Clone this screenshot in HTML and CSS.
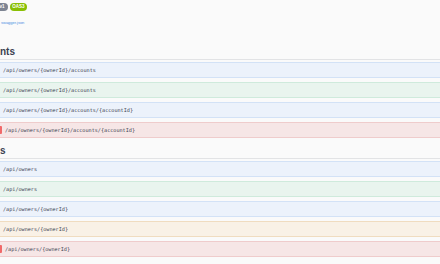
FILE: index.html
```html
<!DOCTYPE html>
<html>
<head>
<meta charset="utf-8">
<link rel="stylesheet" href="styles.css">
</head>
<body>
<div class="page">
  <div class="info">
    <div class="badges">
      <span class="badge version">v1</span>
      <span class="badge oas">OAS3</span>
    </div>
    <a class="spec-link">swagger.json</a>
  </div>

  <section class="tag">
    <h3 class="tag-title">nts</h3>
    <div class="ops">
      <div class="op get"><span class="method"></span><span class="path">/api/owners/{ownerId}/accounts</span></div>
      <div class="op post"><span class="method"></span><span class="path">/api/owners/{ownerId}/accounts</span></div>
      <div class="op get"><span class="method"></span><span class="path">/api/owners/{ownerId}/accounts/{accountId}</span></div>
      <div class="op delete"><span class="method"></span><span class="path">/api/owners/{ownerId}/accounts/{accountId}</span></div>
    </div>
  </section>

  <section class="tag">
    <h3 class="tag-title">s</h3>
    <div class="ops">
      <div class="op get"><span class="method"></span><span class="path">/api/owners</span></div>
      <div class="op post"><span class="method"></span><span class="path">/api/owners</span></div>
      <div class="op get"><span class="method"></span><span class="path">/api/owners/{ownerId}</span></div>
      <div class="op put"><span class="method"></span><span class="path">/api/owners/{ownerId}</span></div>
      <div class="op delete"><span class="method"></span><span class="path">/api/owners/{ownerId}</span></div>
    </div>
  </section>
</div>
</body>
</html>
```

FILE: styles.css
```css
html, body {
  margin: 0;
  padding: 0;
  background: #fafafa;
}

.page {
  width: 440px;
  height: 264px;
  overflow: hidden;
  font-family: "Liberation Sans", Arial, sans-serif;
  color: #3b4151;
}

.info {
  padding-top: 3px;
  height: 46px;
  box-sizing: border-box;
}

.badges {
  display: flex;
  gap: 2px;
  height: 8px;
  margin-left: -4px;
}

.badge {
  display: flex;
  align-items: center;
  justify-content: center;
  height: 8px;
  border-radius: 4px;
  color: #fff;
  font-size: 4.5px;
  font-weight: 700;
  line-height: 8px;
}

.version {
  width: 12px;
  background: #7d8492;
}

.oas {
  width: 17px;
  background: #89bf04;
}

.spec-link {
  display: block;
  margin-top: 9px;
  margin-left: 1px;
  font-size: 4px;
  line-height: 5px;
  color: #4990e2;
}

.tag-title {
  margin: 0;
  font-size: 10px;
  line-height: 12px;
  font-weight: 700;
  padding-bottom: 1px;
  border-bottom: 1px solid rgba(59, 65, 81, 0.12);
  color: #3b4151;
}

.ops {
  display: flex;
  flex-direction: column;
  gap: 4px;
  margin-top: 2px;
}

.tag + .tag {
  margin-top: 7px;
}

.op {
  height: 16px;
  box-sizing: border-box;
  display: flex;
  align-items: center;
  border-top: 1px solid;
  border-bottom: 1px solid;
}

.method {
  width: 0;
  height: 8px;
}

.path {
  margin-left: 3px;
  font-family: "DejaVu Sans Mono", "Liberation Mono", monospace;
  font-size: 5.15px;
  font-weight: 400;
  color: #3b4151;
  white-space: nowrap;
}

.get {
  background: #ecf2fb;
  border-color: #d3e2f6;
}

.post {
  background: #e9f4ee;
  border-color: #cfeadc;
}

.put {
  background: #f9f1e6;
  border-color: #f0dcc0;
}

.delete {
  background: #f6e6e6;
  border-color: #efcccc;
}

.delete .method {
  width: 2px;
  background: #f06a6a;
  border-radius: 0 1px 1px 0;
}

.delete .path {
  margin-left: 3px;
}
```
